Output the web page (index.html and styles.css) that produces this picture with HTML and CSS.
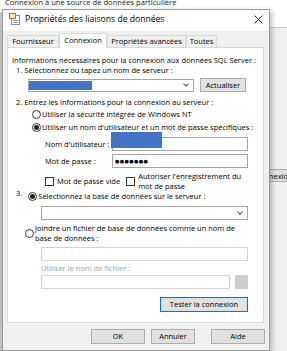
FILE: index.html
```html
<!DOCTYPE html>
<html lang="fr">
<head>
    <meta charset="UTF-8">
    <title>Propriétés des liaisons de données</title>
    <link rel="stylesheet" href="styles.css">
</head>
<body>

    <div class="desk">
        <p class="behind-text">Connexion à une source de données particulière</p>
        <div class="behind-left"></div>
        <div class="behind-right">
            <span class="behind-btn">Connexion</span>
        </div>

        <div class="dialog">
            <div class="titlebar">
                <svg class="app-icon" width="11" height="12" viewBox="0 0 11 12">
                    <rect x="2.5" y="2.5" width="8" height="9" fill="#fff" stroke="#8a8a8a"/>
                    <rect x="0.5" y="0.5" width="6" height="5" fill="#fbe3c4" stroke="#c8662a"/>
                    <line x1="4" y1="7.5" x2="9" y2="7.5" stroke="#9a9a9a"/>
                    <line x1="4" y1="9.5" x2="9" y2="9.5" stroke="#9a9a9a"/>
                </svg>
                <span class="title">Propriétés des liaisons de données</span>
                <svg class="close" width="9" height="9" viewBox="0 0 9 9">
                    <path d="M0.5 0.5 L8.5 8.5 M8.5 0.5 L0.5 8.5" stroke="#111" stroke-width="0.9"/>
                </svg>
            </div>

            <div class="dialog-body">
                <div class="tabs">
                    <span class="tab tab-1">Fournisseur</span>
                    <span class="tab tab-2 active">Connexion</span>
                    <span class="tab tab-3">Propriétés avancées</span>
                    <span class="tab tab-4">Toutes</span>
                </div>

                <div class="pane">
                    <div class="redact redact-user"></div>

                    <p class="info">Informations nécessaires pour la connexion aux données SQL Server :</p>
                    <p class="step">1. Sélectionnez ou tapez un nom de serveur :</p>
                    <div class="row server-row">
                        <div class="combo server-combo">
                            <span class="redact-server"></span>
                            <span class="chevron"></span>
                        </div>
                        <span class="btn refresh">Actualiser</span>
                    </div>

                    <p class="step step-2">2. Entrez les informations pour la connexion au serveur :</p>
                    <div class="row radio-row r1">
                        <span class="radio"></span>
                        <span>Utiliser la sécurité intégrée de Windows NT</span>
                    </div>
                    <div class="row radio-row r2">
                        <span class="radio checked"></span>
                        <span>Utiliser un nom d'utilisateur et un mot de passe spécifiques :</span>
                    </div>
                    <div class="row field-row user-row">
                        <span class="field-label">Nom d'utilisateur :</span>
                        <span class="input wide"></span>
                    </div>
                    <div class="row field-row pass-row">
                        <span class="field-label">Mot de passe :</span>
                        <span class="input wide"><span class="dots">●●●●●●●</span></span>
                    </div>
                    <div class="row check-row">
                        <span class="check"></span>
                        <span class="check-text">Mot de passe vide</span>
                        <span class="check check-2"></span>
                        <span class="check-text">Autoriser l'enregistrement du<br>mot de passe</span>
                    </div>

                    <div class="row step3-row">
                        <span class="num">3.</span>
                        <span class="radio checked"></span>
                        <span>Sélectionnez la base de données sur le serveur :</span>
                    </div>
                    <div class="combo db-combo"><span class="chevron"></span></div>
                    <div class="row attach-row">
                        <span class="radio"></span>
                        <span>Joindre un fichier de base de données comme un nom de<br>base de données :</span>
                    </div>
                    <span class="input disabled db-name"></span>
                    <p class="file-label">Utiliser le nom de fichier :</p>
                    <div class="row file-row">
                        <span class="input disabled file-input"></span>
                        <span class="browse">...</span>
                    </div>
                    <div class="row test-row">
                        <span class="btn test">Tester la connexion</span>
                    </div>
                </div>

                <div class="actions">
                    <span class="btn action ok">OK</span>
                    <span class="btn action cancel">Annuler</span>
                    <span class="btn action help">Aide</span>
                </div>
            </div>
        </div>
    </div>

</body>
</html>
```

FILE: styles.css
```css
* {
    margin: 0;
    padding: 0;
    box-sizing: border-box;
}

body {
    font-family: 'Open Sans', 'Noto Sans', sans-serif;
    font-size: 7.5px;
    line-height: 10px;
    color: #000;
    background-color: #fff;
    width: 287px;
    height: 351px;
    overflow: hidden;
    white-space: nowrap;
}

.desk {
    position: relative;
    width: 287px;
    height: 351px;
}

/* Windows behind the dialog */
.behind-text {
    position: absolute;
    left: 5px;
    top: -3px;
    font-size: 7.6px;
    color: #222;
}

.behind-left {
    position: absolute;
    left: 0;
    top: 12px;
    width: 2px;
    height: 339px;
    background-color: #c4c4c4;
}

.behind-right {
    position: absolute;
    left: 262px;
    top: 27px;
    width: 30px;
    height: 324px;
    background-color: #f0f0f0;
    border-top: 1px solid #c9c9c9;
}

.behind-btn {
    position: absolute;
    left: -12px;
    top: 141px;
    height: 13px;
    line-height: 12px;
    padding: 0 4px;
    background-color: #e1e1e1;
    border: 1px solid #adadad;
}

/* Dialog window */
.dialog {
    position: absolute;
    left: 2px;
    top: 9px;
    width: 268px;
    height: 342px;
    border: 1px solid #9a9a9a;
    background-color: #f0f0f0;
    box-shadow: 2px 2px 5px rgba(0, 0, 0, 0.25);
}

.titlebar {
    height: 21px;
    background-color: #fff;
    display: flex;
    align-items: center;
    padding-bottom: 3px;
}

.app-icon {
    margin-left: 6px;
}

.title {
    margin-left: 5px;
    font-size: 8.6px;
}

.close {
    margin-left: auto;
    margin-right: 6px;
}

.dialog-body {
    padding: 2px 5px 0 4px;
}

.tabs {
    display: flex;
    height: 14px;
    align-items: flex-end;
}

.tab {
    height: 12px;
    line-height: 11px;
    text-align: center;
    border: 1px solid #d9d9d9;
    border-bottom: none;
    background-color: #f0f0f0;
}

.tab-1 { width: 52px; }
.tab-2 { width: 48px; }
.tab-3 { width: 79px; }
.tab-4 { width: 31px; }

.tab.active {
    height: 15px;
    margin-bottom: -1px;
    line-height: 12px;
    background-color: #fff;
    position: relative;
    z-index: 1;
}

.pane {
    position: relative;
    height: 276px;
    background-color: #fff;
    border: 1px solid #d9d9d9;
    padding: 0 15px 0 4px;
    display: flex;
    flex-direction: column;
}

.row {
    display: flex;
    align-items: center;
}

.info {
    margin-top: 7px;
}

.step {
    padding-left: 4px;
}

.step-2 {
    margin-top: 5px;
}

.server-row {
    margin-top: 3px;
    padding-left: 16px;
}

.combo {
    height: 13px;
    border: 1px solid #a5a5a5;
    background-color: #fff;
    display: flex;
    align-items: center;
}

.server-combo {
    width: 166px;
}

.redact-server {
    width: 63px;
    height: 9px;
    background-color: #4472c4;
}

.chevron {
    margin-left: auto;
    margin-right: 5px;
    width: 4px;
    height: 4px;
    border-right: 1px solid #555;
    border-bottom: 1px solid #555;
    transform: rotate(45deg);
    margin-top: -2px;
}

.btn {
    height: 14px;
    line-height: 12px;
    text-align: center;
    background-color: #e1e1e1;
    border: 1px solid #adadad;
}

.refresh {
    width: 46px;
    margin-left: 6px;
}

.radio-row {
    padding-left: 20px;
    height: 10px;
}

.r1 { margin-top: 2px; }
.r2 { margin-top: 3px; }

.radio {
    width: 9px;
    height: 9px;
    border: 1px solid #333;
    border-radius: 50%;
    background-color: #fff;
    margin-right: 1px;
    display: flex;
    align-items: center;
    justify-content: center;
    flex-shrink: 0;
}

.radio.checked::after {
    content: "";
    width: 5px;
    height: 5px;
    border-radius: 50%;
    background-color: #222;
}

.field-row {
    padding-left: 33px;
}

.user-row { margin-top: 5px; }
.pass-row { margin-top: 3px; }

.field-label {
    width: 67px;
}

.input {
    display: flex;
    align-items: center;
    height: 14px;
    border: 1px solid #a5a5a5;
    background-color: #fff;
}

.wide {
    width: 136px;
}

.dots {
    font-family: 'DejaVu Sans', sans-serif;
    font-size: 5px;
    letter-spacing: 0.4px;
    padding-left: 2px;
}

.redact-user {
    position: absolute;
    left: 103px;
    top: 84px;
    width: 51px;
    height: 16px;
    background-color: #4472c4;
}

.check-row {
    margin-top: 3px;
    padding-left: 33px;
    height: 20px;
}

.check {
    width: 9px;
    height: 9px;
    border: 1px solid #333;
    background-color: #fff;
    flex-shrink: 0;
    margin-right: 3px;
}

.check-2 {
    margin-left: 6px;
}

.step3-row {
    padding-left: 4px;
    height: 10px;
}

.num {
    align-self: flex-start;
    margin-top: -3px;
    margin-right: 6px;
}

.db-combo {
    margin-top: 5px;
    margin-left: 29px;
    width: 207px;
    height: 14px;
}

.attach-row {
    margin-top: 3px;
    padding-left: 13px;
    height: 20px;
}

.disabled {
    border-color: #d4d4d4;
}

.db-name {
    margin-top: 4px;
    margin-left: 29px;
    width: 207px;
}

.file-label {
    margin-top: 2px;
    padding-left: 29px;
    color: #a0a0a0;
}

.file-row {
    margin-top: 2px;
    padding-left: 29px;
}

.file-input {
    width: 189px;
}

.browse {
    width: 13px;
    height: 14px;
    margin-left: 5px;
    background-color: #cccccc;
    color: #8a8a8a;
    font-size: 5px;
    line-height: 18px;
    text-align: center;
}

.test-row {
    margin-top: 8px;
    justify-content: flex-end;
}

.test {
    width: 88px;
    height: 15px;
    line-height: 13px;
    border: 1px solid #0078d7;
    box-shadow: inset 0 0 0 1px #cde3f7;
}

.actions {
    display: flex;
    justify-content: flex-end;
    margin-top: 6px;
    margin-right: -1px;
}

.action {
    height: 15px;
    line-height: 13px;
}

.ok { width: 54px; }
.cancel { width: 44px; margin-left: 6px; }
.help { width: 54px; margin-left: 16px; }
```
